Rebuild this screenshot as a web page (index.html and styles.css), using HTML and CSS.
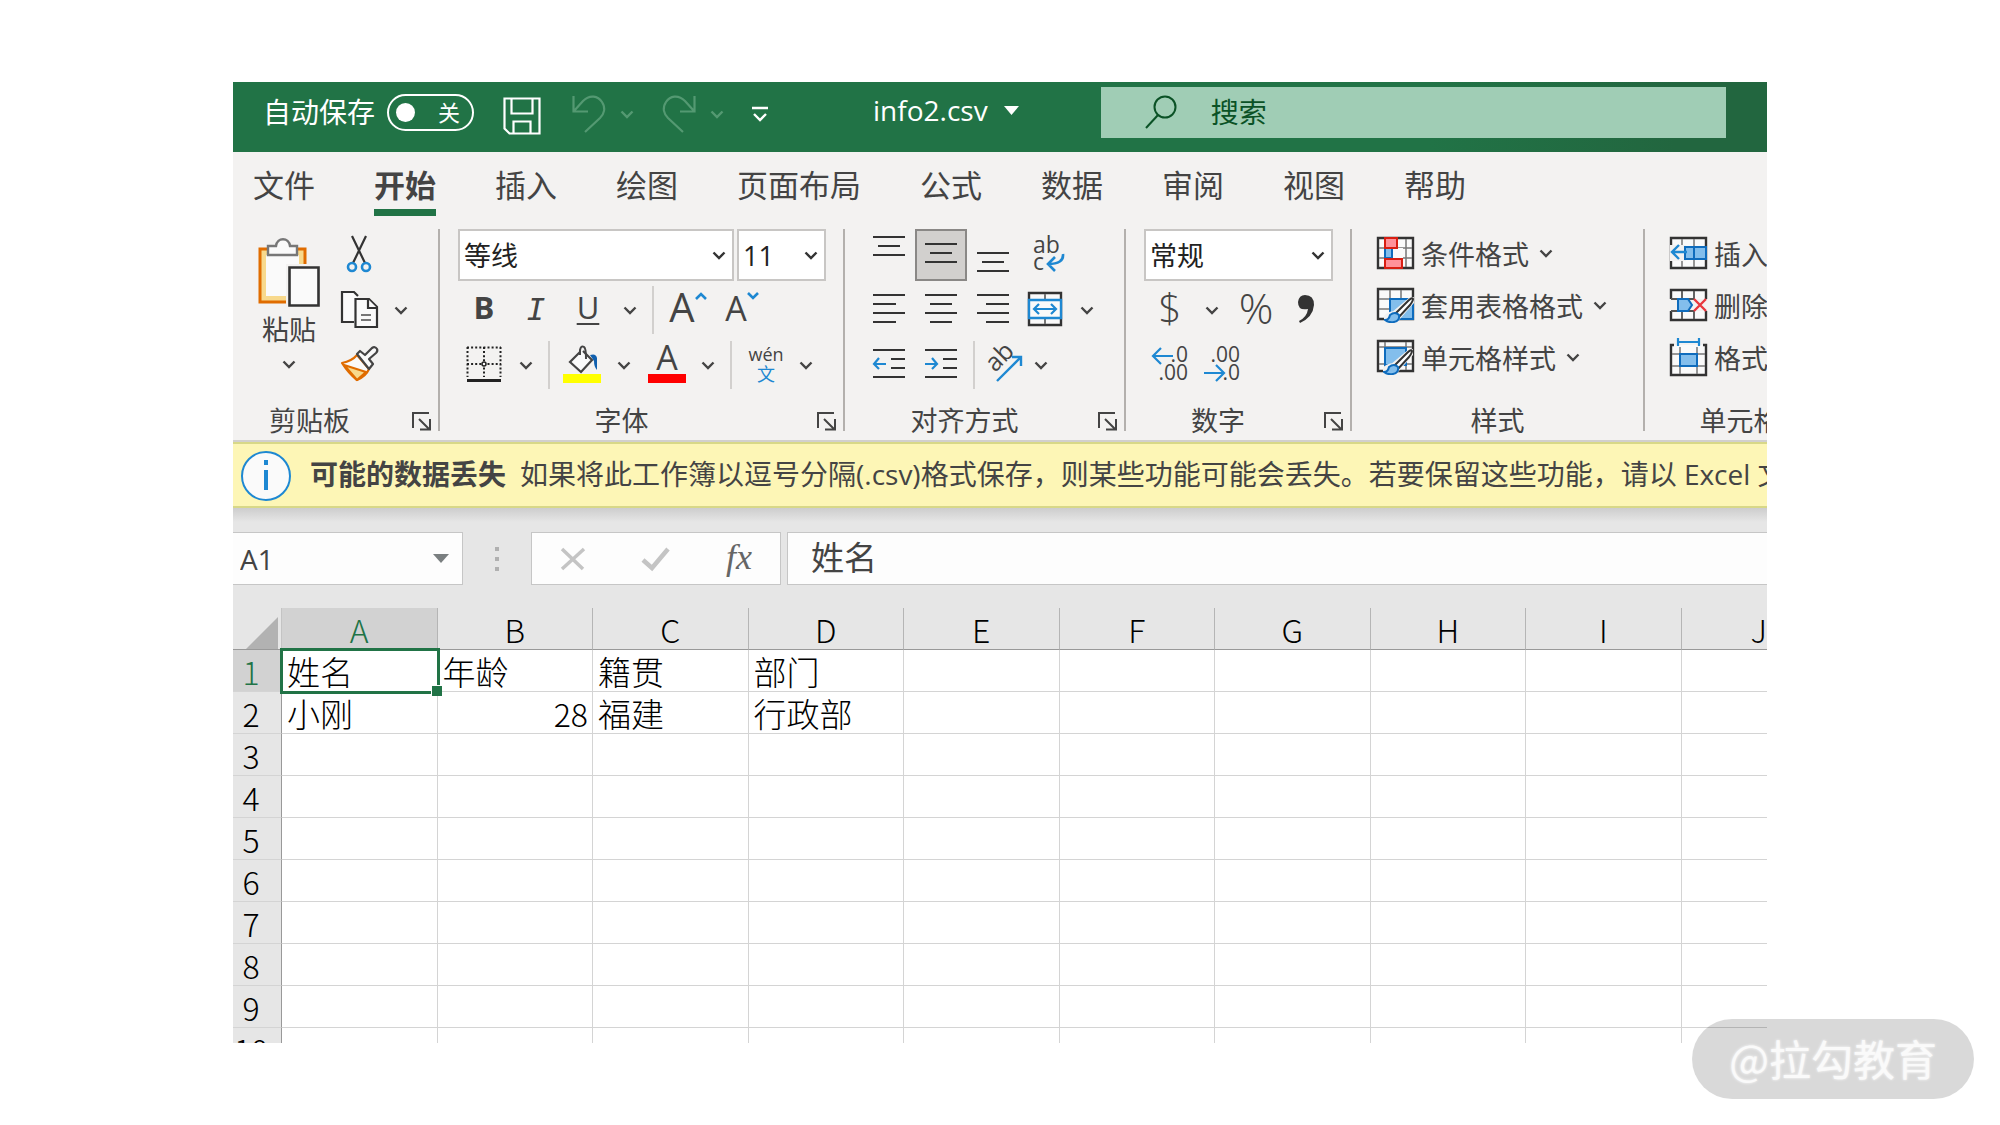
FILE: index.html
```html
<!DOCTYPE html>
<html lang="zh-CN">
<head>
    <meta charset="UTF-8">
    <title>info2.csv</title>
    <link rel="stylesheet" href="styles.css">
</head>
<body>
    <svg class="symbols" aria-hidden="true">
        <symbol id="chevron" viewBox="0 0 14 9"><path d="M1.500 1.500L7 7L12.500 1.500" fill="none" stroke="currentColor" stroke-width="2.400"/></symbol>
        <symbol id="launcher" viewBox="0 0 19 19"><path d="M1 16V1H17M7 7L17 17M18 7V17.500H8" fill="none" stroke="#444" stroke-width="2"/></symbol>
        <symbol id="brush" viewBox="0 0 30 26">
            <path d="M28 1L10 16Q2 17 1 22Q10 27 15 20L29 4Z" fill="#fff" stroke="#f3f2f1" stroke-width="4"/>
            <path d="M11 17L24 4Q28 0 29 2Q29 4 26 8L15 20Z" fill="#fff" stroke="#333" stroke-width="2"/>
            <path d="M1 23Q5 23 6 18Q11 14 15 18Q16 24 10 25Q5 26 1 23Z" fill="#83beec" stroke="#0f6cbd" stroke-width="2"/>
        </symbol>
    </svg>
    <div class="window">
        <header class="titlebar">
            <label class="autosave">自动保存
                <span class="toggle"><input type="checkbox" name="autosave">关</span>
            </label>
            <button class="quick save" title="保存">
                <svg width="38" height="38" viewBox="0 0 38 38" fill="none" stroke="#fff" stroke-width="2.200"><path d="M1.500 1.500H36.500V36.500H6.500L1.500 31.500ZM8.500 1.500V16.500H29.500V1.500M10.500 36.500V24.500H27.500V36.500"/></svg>
            </button>
            <button class="quick faded" title="撤消">
                <svg width="34" height="38" viewBox="0 0 34 38" fill="none" stroke="currentColor" stroke-width="2.200"><path d="M1.500 1V16.500H16M2 16L11 6C18 -1 26 1 30 7C34 13 32 19 28 23L13 37"/></svg>
                <svg class="chev"><use href="#chevron"/></svg>
            </button>
            <button class="quick faded" title="恢复">
                <svg width="34" height="38" viewBox="0 0 34 38" fill="none" stroke="currentColor" stroke-width="2.200"><path d="M32.500 1V16.500H18M32 16L23 6C16 -1 8 1 4 7C0 13 2 19 6 23L21 37"/></svg>
                <svg class="chev"><use href="#chevron"/></svg>
            </button>
            <button class="quick" title="自定义快速访问工具栏">
                <svg width="16" height="16" viewBox="0 0 16 16" fill="none" stroke="#fff" stroke-width="2.400"><path d="M0 2H16M2 8L8 14L14 8"/></svg>
            </button>
            <button class="filename">info2.csv
                <svg width="15" height="9" viewBox="0 0 15 9"><path d="M0 0H15L7.500 9Z" fill="#fff"/></svg>
            </button>
            <label class="search">
                <svg width="32" height="34" viewBox="0 0 32 34" fill="none" stroke="#0b5226" stroke-width="2"><circle cx="20" cy="12" r="10.500"/><path d="M13 20L1 33"/></svg>
                <input type="search" placeholder="搜索" aria-label="搜索">
            </label>
        </header>

        <nav class="tabs">
            <a href="#">文件</a>
            <a href="#" class="active">开始</a>
            <a href="#">插入</a>
            <a href="#">绘图</a>
            <a href="#">页面布局</a>
            <a href="#">公式</a>
            <a href="#">数据</a>
            <a href="#">审阅</a>
            <a href="#">视图</a>
            <a href="#">帮助</a>
        </nav>

        <div class="ribbon">
            <section class="group clipboard">
                <div class="controls">
                    <button class="paste">
                        <svg width="64" height="70" viewBox="0 0 64 70">
                            <path d="M3 11H48V64H3Z" fill="#f8d98c" stroke="#e06c00" stroke-width="3"/>
                            <path d="M9 17H42V58H9Z" fill="#fafafa"/>
                            <path d="M11 17V8H19C20 -1 32 -1 33 8H40V17Z" fill="#fafafa" stroke="#777" stroke-width="2.400"/>
                            <path d="M29 26H64V70H29Z" fill="#f3f2f1"/>
                            <path d="M32.500 29.500H61.500V67.500H32.500Z" fill="#fafafa" stroke="#333" stroke-width="2.600"/>
                        </svg>
                        粘贴
                        <svg class="chev"><use href="#chevron"/></svg>
                    </button>
                    <div class="rows">
                        <div class="row">
                            <button class="tool" title="剪切">
                                <svg width="26" height="38" viewBox="0 0 26 38" fill="none"><path d="M6 1L19 28M20 1L7 28" stroke="#333" stroke-width="2.200"/><circle cx="6" cy="32" r="4" stroke="#1e88d2" stroke-width="2.600"/><circle cx="20" cy="32" r="4" stroke="#1e88d2" stroke-width="2.600"/></svg>
                            </button>
                        </div>
                        <div class="row">
                            <button class="tool" title="复制">
                                <svg width="38" height="38" viewBox="0 0 38 38" fill="#fafafa" stroke="#333" stroke-width="2.200"><path d="M14 32H2V2H14L18 6"/><path d="M15.500 9H29L37 17V37H15.500Z"/><path d="M28 9V18H37" /><path d="M21 25H31M21 30H31" stroke="#777"/></svg>
                            </button>
                            <button class="drop"><svg class="chev"><use href="#chevron"/></svg></button>
                        </div>
                        <div class="row">
                            <button class="tool" title="格式刷">
                                <svg width="38" height="36" viewBox="0 0 38 36" fill="#fafafa" stroke-width="2.200" stroke-linejoin="round"><path d="M17 9Q12 15 2 17Q9 28 17 34Q26 30 29 23Z" stroke="#e06c00"/><path d="M4 19L26 26L17 34Z" fill="#f8d98c" stroke="#e06c00"/><path d="M17 8L20 5L25 9L32 2Q35 0 37 3Q38 5 36 7L29 13L33 18L29 23Z" stroke="#444"/></svg>
                            </button>
                        </div>
                    </div>
                </div>
                <footer><span>剪贴板</span><button class="launch"><svg width="19" height="19"><use href="#launcher"/></svg></button></footer>
            </section>

            <section class="group font">
                <div class="controls rows">
                    <div class="row combos">
                        <select class="combo" aria-label="字体"><option>等线</option></select>
                        <select class="combo size" aria-label="字号"><option>11</option></select>
                    </div>
                    <div class="row">
                        <button class="tool bold">B</button>
                        <button class="tool italic">I</button>
                        <button class="tool underline">U</button>
                        <button class="drop"><svg class="chev"><use href="#chevron"/></svg></button>
                        <span class="sep"></span>
                        <button class="tool grow" title="增大字号">A<svg width="12" height="8" viewBox="0 0 12 8" fill="none" stroke="#1e88d2" stroke-width="2.600"><path d="M1 7L6 2L11 7"/></svg></button>
                        <button class="tool shrink" title="减小字号">A<svg width="12" height="8" viewBox="0 0 12 8" fill="none" stroke="#1e88d2" stroke-width="2.600"><path d="M1 1L6 6L11 1"/></svg></button>
                    </div>
                    <div class="row">
                        <button class="tool" title="边框">
                            <svg width="36" height="36" viewBox="0 0 36 36" fill="#fafafa" stroke="#222"><path d="M1 1.500H35M1.500 1V31M34.500 1V31M18 1V31M1 18H35" stroke-width="2" stroke-dasharray="2 2.100"/><circle cx="18" cy="18" r="2" stroke-width="1.500"/><path d="M1 34.500H35" stroke-width="3"/></svg>
                        </button>
                        <button class="drop"><svg class="chev"><use href="#chevron"/></svg></button>
                        <span class="sep"></span>
                        <button class="tool" title="填充颜色">
                            <svg width="38" height="38" viewBox="0 0 38 38"><path d="M17 7L7 17L18 27L29 15L20 6" fill="#fafafa" stroke="#444" stroke-width="2.200"/><path d="M17 10V5Q18 0 21 2Q23 3 23 14" fill="none" stroke="#444" stroke-width="2"/><path d="M27 10Q33 8 34 13V25Q31 22 31 16Z" fill="#0f5fae"/><path d="M0 29H38V38H0Z" fill="#ff0"/></svg>
                        </button>
                        <button class="drop"><svg class="chev"><use href="#chevron"/></svg></button>
                        <button class="tool fontcolor" title="字体颜色">A</button>
                        <button class="drop"><svg class="chev"><use href="#chevron"/></svg></button>
                        <span class="sep"></span>
                        <button class="tool pinyin">wén<span>文</span></button>
                        <button class="drop"><svg class="chev"><use href="#chevron"/></svg></button>
                    </div>
                </div>
                <footer><span>字体</span><button class="launch"><svg width="19" height="19"><use href="#launcher"/></svg></button></footer>
            </section>

            <section class="group align">
                <div class="controls rows">
                    <div class="row">
                        <button class="tool" title="顶端对齐"><svg width="32" height="38" viewBox="0 0 32 38" stroke="#333" stroke-width="2.200"><path d="M0 2H32M5 11H27M0 20H32"/></svg></button>
                        <button class="tool pressed" title="垂直居中"><svg width="32" height="38" viewBox="0 0 32 38" stroke="#333" stroke-width="2.200"><path d="M0 9H32M5 18H27M0 27H32"/></svg></button>
                        <button class="tool" title="底端对齐"><svg width="32" height="38" viewBox="0 0 32 38" stroke="#333" stroke-width="2.200"><path d="M0 18H32M5 27H27M0 36H32"/></svg></button>
                        <button class="tool" title="自动换行">
                            <svg width="44" height="40" viewBox="0 0 44 40"><text class="glyph" x="10" y="19" font-size="23">ab</text><text class="glyph" x="10" y="36" font-size="23">c</text><path d="M40 20Q41 30 25 30M32 23L25 30L32 37" fill="none" stroke="#1e88d2" stroke-width="2.600"/></svg>
                        </button>
                    </div>
                    <div class="row">
                        <button class="tool" title="左对齐"><svg width="32" height="32" viewBox="0 0 32 32" stroke="#333" stroke-width="2.200"><path d="M0 2H32M0 11H23M0 20H32M0 29H23"/></svg></button>
                        <button class="tool" title="居中"><svg width="32" height="32" viewBox="0 0 32 32" stroke="#333" stroke-width="2.200"><path d="M0 2H32M5 11H27M0 20H32M5 29H27"/></svg></button>
                        <button class="tool" title="右对齐"><svg width="32" height="32" viewBox="0 0 32 32" stroke="#333" stroke-width="2.200"><path d="M0 2H32M9 11H32M0 20H32M9 29H32"/></svg></button>
                        <button class="tool" title="合并后居中">
                            <svg width="34" height="34" viewBox="0 0 34 34" fill="#fafafa"><path d="M1 1H33V33H1Z" stroke="#333" stroke-width="2.400"/><path d="M17 2V32" stroke="#777" stroke-width="2"/><path d="M1 8H33V26H1Z" stroke="#1e88d2" stroke-width="2.400"/><path d="M6 17H28M11 12L6 17L11 22M23 12L28 17L23 22" fill="none" stroke="#1e88d2" stroke-width="2.200"/></svg>
                        </button>
                        <button class="drop"><svg class="chev"><use href="#chevron"/></svg></button>
                    </div>
                    <div class="row">
                        <button class="tool" title="减少缩进量"><svg width="32" height="34" viewBox="0 0 32 34" fill="none" stroke="#333" stroke-width="2.200"><path d="M0 3H32M18 12H32M18 21H32M0 30H32"/><path d="M13 17H1M6 11L1 17L6 22" stroke="#1e88d2"/></svg></button>
                        <button class="tool" title="增加缩进量"><svg width="32" height="34" viewBox="0 0 32 34" fill="none" stroke="#333" stroke-width="2.200"><path d="M0 3H32M18 12H32M18 21H32M0 30H32"/><path d="M0 17H12M7 11L12 17L7 22" stroke="#1e88d2"/></svg></button>
                        <span class="sep"></span>
                        <button class="tool narrow" title="方向">
                            <svg width="38" height="38" viewBox="0 0 38 38"><text class="glyph" x="0" y="0" font-size="25" transform="translate(11 28) rotate(-45)">ab</text><path d="M13 36L37 12M28 12H37V21" fill="none" stroke="#1e88d2" stroke-width="2.400"/></svg>
                        </button>
                        <button class="drop"><svg class="chev"><use href="#chevron"/></svg></button>
                    </div>
                </div>
                <footer><span>对齐方式</span><button class="launch"><svg width="19" height="19"><use href="#launcher"/></svg></button></footer>
            </section>

            <section class="group number">
                <div class="controls rows">
                    <div class="row combos">
                        <select class="combo" aria-label="数字格式"><option>常规</option></select>
                    </div>
                    <div class="row">
                        <button class="tool currency">$</button>
                        <button class="drop"><svg class="chev"><use href="#chevron"/></svg></button>
                        <button class="tool percent">%</button>
                        <button class="tool" title="千位分隔样式"><svg width="18" height="30" viewBox="0 0 18 30"><path d="M8 1Q17 1 17 11Q16 23 3 29L2 27Q10 23 11 15Q1 17 1 8Q2 1 8 1Z" fill="#333"/></svg></button>
                    </div>
                    <div class="row">
                        <button class="tool" title="增加小数位数">
                            <svg width="36" height="38" viewBox="0 0 36 38"><text class="glyph" x="36" y="17" text-anchor="end" font-size="21">.0</text><text class="glyph" x="36" y="35" text-anchor="end" font-size="21">.00</text><path d="M21 11H1M9 3L1 11L9 19" fill="none" stroke="#1e88d2" stroke-width="2.200"/></svg>
                        </button>
                        <button class="tool" title="减少小数位数">
                            <svg width="36" height="38" viewBox="0 0 36 38"><text class="glyph" x="36" y="17" text-anchor="end" font-size="21">.00</text><text class="glyph" x="36" y="35" text-anchor="end" font-size="21">.0</text><path d="M0 28H20M12 20L20 28L12 36" fill="none" stroke="#1e88d2" stroke-width="2.200"/></svg>
                        </button>
                    </div>
                </div>
                <footer><span>数字</span><button class="launch"><svg width="19" height="19"><use href="#launcher"/></svg></button></footer>
            </section>

            <section class="group styles">
                <div class="controls list">
                    <button class="command">
                        <svg width="37" height="32" viewBox="0 0 37 32" fill="#fafafa"><path d="M1 1H36V31H1Z" stroke="#333" stroke-width="2.400"/><path d="M2 11H35M2 21H35M8 2V30M29 2V30" stroke="#777" stroke-width="1.500"/><path d="M8 11H15V21H8Z" fill="#83beec" stroke="#0f6cbd" stroke-width="2"/><path d="M16 11H26V21H16Z"/><path d="M8 1H20V11H8ZM8 22H25V31H8Z" fill="#ff9199" stroke="#d81e12" stroke-width="2"/></svg>
                        条件格式
                        <svg class="chev"><use href="#chevron"/></svg>
                    </button>
                    <button class="command">
                        <svg width="37" height="34" viewBox="0 0 37 34" fill="#fafafa"><path d="M1 1H36V31H1Z" stroke="#333" stroke-width="2.400"/><path d="M2 11H35M2 21H12M13 2V30M24 2V11" stroke="#777" stroke-width="1.500"/><path d="M13 11H36V31H13Z" fill="#83beec" stroke="#0f6cbd" stroke-width="2"/><use href="#brush" x="7" y="9" width="30" height="26"/></svg>
                        套用表格格式
                        <svg class="chev"><use href="#chevron"/></svg>
                    </button>
                    <button class="command">
                        <svg width="37" height="34" viewBox="0 0 37 34" fill="#fafafa"><path d="M1 1H36V31H1Z" stroke="#333" stroke-width="2.400"/><path d="M2 7H35M2 24H35M8 2V30M29 2V30" stroke="#777" stroke-width="1.500"/><path d="M8 8H29V25H8Z" fill="#83beec" stroke="#0f6cbd" stroke-width="2"/><use href="#brush" x="6" y="9" width="30" height="26"/></svg>
                        单元格样式
                        <svg class="chev"><use href="#chevron"/></svg>
                    </button>
                </div>
                <footer><span>样式</span></footer>
            </section>

            <section class="group cells">
                <div class="controls list">
                    <button class="command">
                        <svg width="37" height="32" viewBox="0 0 37 32" fill="#fafafa"><path d="M1 1H36V31H1Z" stroke="#333" stroke-width="2.400"/><path d="M2 10H35M2 22H35M12 2V30M24 2V30" stroke="#777" stroke-width="1.500"/><path d="M0 8H16V24H0Z" fill="#f3f2f1"/><path d="M15 10H36V22H15Z" fill="#83beec" stroke="#0f6cbd" stroke-width="2"/><path d="M24 11V21" stroke="#0f6cbd" stroke-width="2"/><path d="M17 15H2M9 8L2 15L9 22" fill="none" stroke="#1e88d2" stroke-width="2.400"/></svg>
                        插入
                    </button>
                    <button class="command">
                        <svg width="37" height="32" viewBox="0 0 37 32" fill="#fafafa"><path d="M1 10V1H36V10M1 22V31H36V22" stroke="#333" stroke-width="2.400"/><path d="M1 10H24M1 22H24M12 2V10M24 2V10M12 22V30M24 22V30" stroke="#555" stroke-width="1.800"/><path d="M8 10H18L22 16L18 22H8Z" fill="#83beec" stroke="#0f6cbd" stroke-width="2"/><path d="M24 10L36 22M36 10L24 22" stroke="#e8373e" stroke-width="2.400"/></svg>
                        删除
                    </button>
                    <button class="command">
                        <svg width="37" height="38" viewBox="0 0 37 38" fill="#fafafa"><path d="M4 7H1V37H36V7H33" stroke="#333" stroke-width="2.400"/><path d="M2 16H35M2 28H35M10 9V36M27 9V36" stroke="#777" stroke-width="1.500"/><path d="M10 16H27V28H10Z" fill="#83beec" stroke="#0f6cbd" stroke-width="2"/><path d="M8 4H29M8 0V8M29 0V8" stroke="#1e88d2" stroke-width="2.200"/></svg>
                        格式
                    </button>
                </div>
                <footer><span>单元格</span></footer>
            </section>
        </div>

        <div class="message">
            <svg width="50" height="50" viewBox="0 0 50 50"><circle cx="25" cy="25" r="24" fill="#fafafa" stroke="#1e88d2" stroke-width="2"/><path d="M25 19V39M25 9V14" stroke="#1e88d2" stroke-width="4"/></svg>
            <strong>可能的数据丢失</strong>
            <span>如果将此工作簿以逗号分隔(.csv)格式保存，则某些功能可能会丢失。若要保留这些功能，请以 Excel 文</span>
        </div>

        <div class="formulabar">
            <div class="namebox">
                <input type="text" value="A1" aria-label="名称框">
                <button title="名称"><svg width="16" height="9" viewBox="0 0 16 9"><path d="M0 0H16L8 9Z" fill="#7a7f80"/></svg></button>
            </div>
            <svg class="grip" width="4" height="24" viewBox="0 0 4 24"><path d="M0 0H4V4H0ZM0 10H4V14H0ZM0 20H4V24H0Z" fill="#b0b0b0"/></svg>
            <div class="actions">
                <button title="取消"><svg width="26" height="24" viewBox="0 0 26 24"><path d="M2 2L23 22M24 2L2 22" stroke="#c4c4c4" stroke-width="3.500"/></svg></button>
                <button title="输入"><svg width="30" height="24" viewBox="0 0 30 24"><path d="M2 13L11 21L27 2" fill="none" stroke="#c4c4c4" stroke-width="4.500"/></svg></button>
                <button class="fx">fx</button>
            </div>
            <input class="formula" type="text" value="姓名" aria-label="编辑栏">
        </div>

        <div class="sheet">
            <table>
                <thead>
                    <tr>
                        <th class="corner"><svg width="32" height="32" viewBox="0 0 32 32"><path d="M32 0V32H0Z" fill="#b2b2b2"/></svg></th>
                        <th class="current">A</th><th>B</th><th>C</th><th>D</th><th>E</th><th>F</th><th>G</th><th>H</th><th>I</th><th>J</th>
                    </tr>
                </thead>
                <tbody>
                    <tr>
                        <th class="current">1</th>
                        <td class="selected">姓名</td><td>年龄</td><td>籍贯</td><td>部门</td><td></td><td></td><td></td><td></td><td></td><td></td>
                    </tr>
                    <tr>
                        <th>2</th>
                        <td>小刚</td><td class="num">28</td><td>福建</td><td>行政部</td><td></td><td></td><td></td><td></td><td></td><td></td>
                    </tr>
                    <tr><th>3</th><td></td><td></td><td></td><td></td><td></td><td></td><td></td><td></td><td></td><td></td></tr>
                    <tr><th>4</th><td></td><td></td><td></td><td></td><td></td><td></td><td></td><td></td><td></td><td></td></tr>
                    <tr><th>5</th><td></td><td></td><td></td><td></td><td></td><td></td><td></td><td></td><td></td><td></td></tr>
                    <tr><th>6</th><td></td><td></td><td></td><td></td><td></td><td></td><td></td><td></td><td></td><td></td></tr>
                    <tr><th>7</th><td></td><td></td><td></td><td></td><td></td><td></td><td></td><td></td><td></td><td></td></tr>
                    <tr><th>8</th><td></td><td></td><td></td><td></td><td></td><td></td><td></td><td></td><td></td><td></td></tr>
                    <tr><th>9</th><td></td><td></td><td></td><td></td><td></td><td></td><td></td><td></td><td></td><td></td></tr>
                    <tr><th>10</th><td></td><td></td><td></td><td></td><td></td><td></td><td></td><td></td><td></td><td></td></tr>
                </tbody>
            </table>
        </div>
    </div>
    <div class="watermark">@拉勾教育</div>
</body>
</html>
```
FILE: styles.css
```css
* {
    box-sizing: border-box;
}
body {
    margin: 0;
    padding: 82px 233px;
    background: #fff;
    color: #444;
    font-family: "Open Sans", "Noto Sans CJK SC", sans-serif;
    font-size: 27px;
}
button {
    display: flex;
    align-items: center;
    justify-content: center;
    padding: 0;
    border: 0;
    background: none;
    color: inherit;
    font: inherit;
    white-space: nowrap;
}
input,
select {
    border: 0;
    font: inherit;
    color: inherit;
}
svg {
    flex: none;
    overflow: visible;
}
.symbols {
    display: none;
}
.chev {
    width: 14px;
    height: 9px;
}
.window {
    display: flex;
    flex-direction: column;
    height: calc(100vh - 164px);
    overflow: hidden;
    background: #e6e6e6;
}

/* title bar */
.titlebar {
    display: flex;
    align-items: center;
    flex: none;
    height: 70px;
    padding: 0 41px 10px 30px;
    background: linear-gradient(90deg, #217346 78%, #22663f 94%);
    color: #fff;
    font-size: 28px;
}
.autosave {
    display: flex;
    align-items: center;
    gap: 12px;
    margin-right: 29px;
    line-height: 36px;
    white-space: nowrap;
}
.toggle {
    display: flex;
    align-items: center;
    justify-content: space-between;
    width: 87px;
    height: 37px;
    padding: 0 12px 0 7px;
    border: 2px solid #fff;
    border-radius: 19px;
    font-size: 22px;
}
.toggle input {
    appearance: none;
    width: 19px;
    height: 19px;
    margin: 0;
    border-radius: 50%;
    background: #fff;
}
.quick {
    gap: 14px;
    height: 50px;
    margin-right: 27px;
    padding-top: 4px;
}
.quick.faded {
    margin-right: 28px;
    color: #549972;
}
.quick.save {
    margin-right: 31px;
    padding-top: 8px;
}
.filename {
    gap: 16px;
    margin-left: 78px;
    padding-bottom: 4px;
}
.search {
    display: flex;
    align-items: center;
    flex: 1;
    gap: 34px;
    height: 51px;
    min-width: 0;
    margin-left: 82px;
    padding-left: 44px;
    background: #a0cdb5;
    color: #0b5226;
}
.search input {
    flex: 1;
    min-width: 0;
    padding: 0;
    background: none;
    outline: 0;
}
.search input::placeholder {
    color: #0b5226;
}

/* ribbon tabs */
.tabs {
    display: flex;
    flex: none;
    gap: 59px;
    height: 77px;
    padding-left: 20px;
    background: #f3f2f1;
    font-size: 31px;
}
.tabs a {
    height: 64px;
    padding-top: 10px;
    border-bottom: 7px solid transparent;
    color: #444;
    line-height: 46px;
    text-decoration: none;
    white-space: nowrap;
}
.tabs a.active {
    border-color: #217346;
    font-weight: bold;
}

/* ribbon */
.ribbon {
    display: flex;
    flex: none;
    padding-bottom: 9px;
    border-bottom: 2px solid #d2d0ce;
    background: #f3f2f1;
}
.group {
    display: flex;
    flex-direction: column;
    flex: none;
    justify-content: space-between;
    height: 202px;
    border-right: 2px solid #b3b0ad;
}
.group.clipboard {
    width: 207px;
}
.group.font {
    width: 405px;
}
.group.align {
    width: 281px;
}
.group.number {
    width: 226px;
}
.group.styles {
    width: 293px;
}
.group.cells {
    width: 190px;
    border: 0;
}
.controls {
    display: flex;
    padding: 0 17px 0 18px;
}
.rows {
    display: flex;
    flex-direction: column;
    gap: 3px;
}
.row {
    display: flex;
    align-items: center;
    height: 52px;
}
.combos {
    gap: 3px;
}
.combo {
    flex: 1;
    appearance: none;
    height: 52px;
    padding: 0 4px;
    border: 2px solid #c8c6c4;
    background: #fff url("data:image/svg+xml,%3Csvg xmlns='http://www.w3.org/2000/svg' width='14' height='9'%3E%3Cpath d='M1.500 1.500L7 7L12.500 1.500' fill='none' stroke='%23333' stroke-width='2.400'/%3E%3C/svg%3E") no-repeat right 6px center;
    color: #222;
}
.combo.size {
    flex: 0 0 89px;
}
.tool {
    width: 52px;
    height: 52px;
    padding-bottom: 3px;
}
.tool.narrow {
    width: 44px;
}
.tool.pressed {
    border: 2px solid #8a8886;
    background: #d2d0ce;
}
.drop {
    width: 32px;
    height: 48px;
}
.sep {
    width: 2px;
    height: 48px;
    margin: 0 6px;
    background: #d2d0ce;
}
.bold {
    padding-bottom: 6px;
    font-size: 31px;
    font-weight: bold;
}
.italic {
    font-family: "DejaVu Sans Mono", monospace;
    font-size: 31px;
    font-style: italic;
}
.underline {
    padding-bottom: 6px;
    font-size: 31px;
    text-decoration: underline 2px;
    text-underline-offset: 4px;
}
.grow,
.shrink {
    align-items: flex-start;
    padding: 0 0 0 4px;
    font-size: 40px;
    line-height: 45px;
}
.grow svg,
.shrink svg {
    margin-top: 8px;
}
.shrink {
    padding-left: 8px;
    font-size: 34px;
    line-height: 49px;
}
.fontcolor {
    width: 38px;
    height: 38px;
    margin: 0 6px 3px 8px;
    border-bottom: 9px solid #f00;
    font-size: 34px;
    line-height: 29px;
}
.pinyin {
    flex-direction: column;
    padding-left: 4px;
    font-size: 18px;
    line-height: 20px;
}
.pinyin span {
    color: #1e88d2;
}
.currency,
.percent {
    padding-bottom: 6px;
    font-size: 40px;
    font-weight: 300;
}
.percent {
    padding-left: 4px;
    font-size: 43px;
}
.glyph {
    fill: #444;
    font-family: "Open Sans", sans-serif;
}
.paste {
    flex-direction: column;
    justify-content: flex-start;
    width: 76px;
    margin-right: 6px;
    padding-top: 9px;
    line-height: 44px;
}
.paste .chev {
    margin-top: 8px;
}
.controls.list {
    flex-direction: column;
    align-items: flex-start;
    gap: 2px;
    padding-left: 25px;
}
.command {
    gap: 7px;
    height: 50px;
    padding-bottom: 2px;
}
.command .chev {
    margin-left: 3px;
}
.group footer {
    display: flex;
    height: 20px;
    line-height: 20px;
}
.group footer span {
    flex: 1;
    text-align: center;
    white-space: nowrap;
}
.clipboard footer span {
    padding-right: 12px;
}
.launch {
    width: 40px;
    justify-content: flex-end;
    padding-right: 7px;
}

/* message bar */
.message {
    display: flex;
    align-items: center;
    flex: none;
    height: 66px;
    padding: 2px 0 0 8px;
    border-top: 2px solid #d8d888;
    border-bottom: 2px solid #d8d888;
    background: #fdf6b6;
    font-size: 28px;
    line-height: 58px;
    white-space: nowrap;
}
.message strong,
.message span {
    padding-bottom: 5px;
}
.message strong {
    margin: 0 14px 0 19px;
}

/* formula bar */
.formulabar {
    display: flex;
    flex: none;
    align-items: center;
    padding: 24px 0 23px;
    background: linear-gradient(#cdcdcd, #e6e6e6 14px);
}
.namebox,
.actions,
.formula {
    height: 53px;
    border: 1px solid #c6c6c6;
    background: #fdfdfd;
}
.namebox {
    display: flex;
    width: 230px;
    padding: 0 13px 0 7px;
    border-left: 0;
}
.namebox input {
    flex: 1;
    min-width: 0;
    padding: 0;
    background: none;
    font-size: 28px;
}
.grip {
    margin: 0 32px;
}
.actions {
    display: flex;
    justify-content: space-between;
    width: 250px;
    padding: 0 28px;
}
.fx {
    padding-bottom: 4px;
    color: #666;
    font-family: "Liberation Serif", serif;
    font-size: 36px;
    font-style: italic;
}
.formula {
    flex: 1;
    margin-left: 6px;
    padding: 0 23px 5px;
    border-right: 0;
    font-size: 33px;
}

/* sheet */
.sheet {
    flex: 1;
    min-height: 0;
    overflow: hidden;
}
table {
    table-layout: fixed;
    width: calc(100% + 70px);
    border-collapse: separate;
    border-spacing: 0;
    color: #000;
    font-family: "Noto Sans CJK SC", sans-serif;
    font-size: 32px;
    font-weight: 300;
    line-height: 40px;
}
th,
td {
    height: 42px;
    padding: 0;
    border-right: 1px solid #d4d4d4;
    border-bottom: 1px solid #d4d4d4;
    white-space: nowrap;
}
th {
    background: #e6e6e6;
    font-weight: 300;
}
thead th {
    border-right-color: #b5b5b5;
    border-bottom-color: #999;
}
th:first-child {
    width: 49px;
    padding-right: 12px;
    border-right-color: #999;
}
th.corner {
    padding: 0 3px 0 0;
    border-right-color: #c4c4c4;
    text-align: right;
}
.corner svg {
    display: inline-block;
    vertical-align: middle;
}
th.current {
    background: #d2d2d2;
    color: #217346;
}
td {
    padding: 0 4px 0 5px;
    background: #fff;
    font-size: 33px;
}
td.num {
    font-size: 32px;
    text-align: right;
}
td.selected {
    position: relative;
    outline: 3px solid #217346;
    outline-offset: -1px;
}
td.selected::after {
    content: "";
    position: absolute;
    right: -5px;
    bottom: -5px;
    width: 10px;
    height: 10px;
    border: 1px solid #fff;
    border-width: 1px 0 0 1px;
    background: #217346;
}

.watermark {
    position: absolute;
    right: 26px;
    bottom: 26px;
    padding: 0 37px;
    border-radius: 40px;
    background: rgba(0, 0, 0, 0.15);
    color: #fafafa;
    font-family: "Noto Sans CJK SC", sans-serif;
    font-size: 42px;
    line-height: 78px;
    padding-bottom: 2px;
    text-shadow: 0 0 3px #fff;
}
```
